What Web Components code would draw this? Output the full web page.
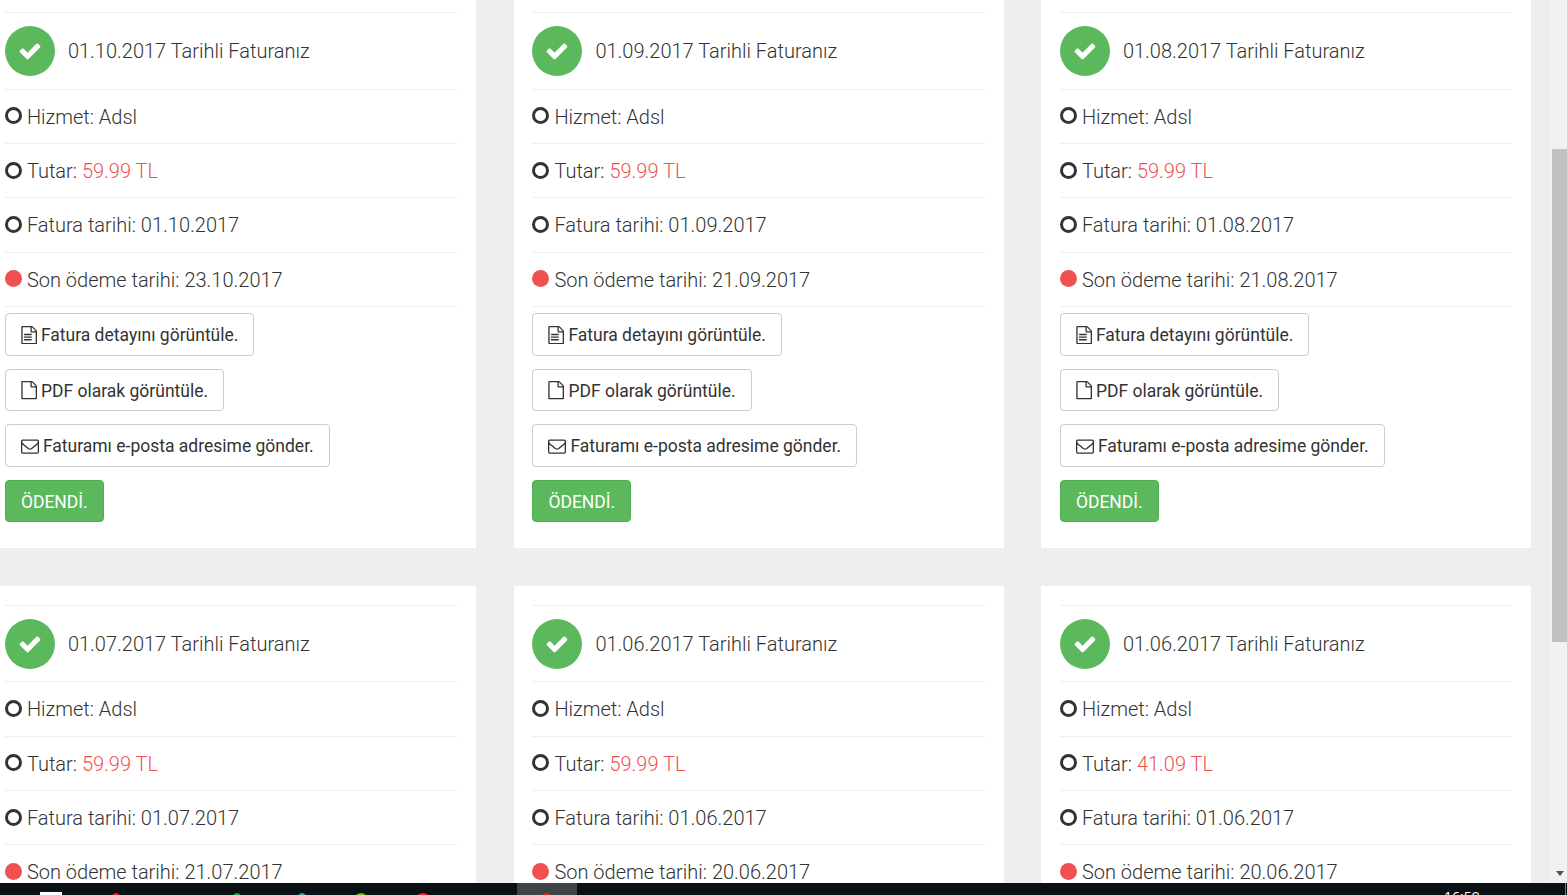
<!DOCTYPE html>
<html lang="tr">
<head>
<meta charset="utf-8">
<title>Faturalar</title>
<style>
  html, body { margin: 0; height: 100%; overflow: hidden; }
  body { font-family: Roboto, "Liberation Sans", sans-serif; background: #eee; }
</style>
</head>
<body>
<invoice-page>
  <invoice-card date="01.10.2017" due="23.10.2017" amount="59.99 TL" actions></invoice-card>
  <invoice-card date="01.09.2017" due="21.09.2017" amount="59.99 TL" actions></invoice-card>
  <invoice-card date="01.08.2017" due="21.08.2017" amount="59.99 TL" actions></invoice-card>
  <invoice-card date="01.07.2017" due="21.07.2017" amount="59.99 TL"></invoice-card>
  <invoice-card date="01.06.2017" due="20.06.2017" amount="59.99 TL"></invoice-card>
  <invoice-card date="01.06.2017" due="20.06.2017" amount="41.09 TL"></invoice-card>
</invoice-page>

<script>
const FA_PATHS = {
  check: "M1671 566q0 40-28 68l-724 724-136 136q-28 28-68 28t-68-28l-136-136-362-362q-28-28-28-68t28-68l136-136q28-28 68-28t68 28l294 295 656-657q28-28 68-28t68 28l136 136q28 28 28 68z",
  file: "M1596 380q28 28 48 76t20 88v1152q0 40-28 68t-68 28h-1344q-40 0-68-28t-28-68v-1600q0-40 28-68t68-28h896q40 0 88 20t76 48zm-444-244v376h376q-10-29-22-41l-313-313q-12-12-41-22zm384 1528v-1024h-416q-40 0-68-28t-28-68v-416h-768v1536h1280z",
  lines: "M384 800q0-14 9-23t23-9h704q14 0 23 9t9 23v64q0 14-9 23t-23 9h-704q-14 0-23-9t-9-23v-64zm736 224q14 0 23 9t9 23v64q0 14-9 23t-23 9h-704q-14 0-23-9t-9-23v-64q0-14 9-23t23-9h704zm0 256q14 0 23 9t9 23v64q0 14-9 23t-23 9h-704q-14 0-23-9t-9-23v-64q0-14 9-23t23-9h704z",
  envelope: "M1664 1504v-768q-32 36-69 66-268 206-426 338-51 43-83 67t-86.500 48.500-102.500 24.500h-2q-48 0-102.500-24.500t-86.500-48.500-83-67q-158-132-426-338-37-30-69-66v768q0 13 9.500 22.500t22.500 9.500h1472q13 0 22.500-9.500t9.500-22.500zm0-1051v-24.500l-.5-13-3-12.500-5.500-9-9-7.500-14-2.500h-1472q-13 0-22.500 9.500t-9.500 22.500q0 168 147 284 193 152 401 317 6 5 35 29.500t46 37.500 44.500 31.500 50.500 27.500 43 9h2q20 0 43-9t50.500-27.500 44.500-31.500 46-37.500 35-29.500q208-165 401-317 54-43 100.500-115.500t46.500-131.500zm128-37v1088q0 66-47 113t-113 47h-1472q-66 0-113-47t-47-113v-1088q0-66 47-113t113-47h1472q66 0 113 47t47 113z"
};

class FaIcon extends HTMLElement {
  connectedCallback() {
    const names = { "file-text": ["file", "lines"], file: ["file"], envelope: ["envelope"], check: ["check"] }[this.getAttribute("name")];
    this.attachShadow({ mode: "open" }).innerHTML = `
      <style>
        :host { display: inline-block; width: 1em; height: 1em; line-height: 0; flex: none; }
        svg { width: 100%; height: 100%; fill: currentColor; }
      </style>
      <svg viewBox="0 0 1792 1792">${names.map(n => `<path d="${FA_PATHS[n]}"/>`).join("")}</svg>`;
  }
}
customElements.define("fa-icon", FaIcon);

class InfoRow extends HTMLElement {
  connectedCallback() {
    this.attachShadow({ mode: "open" }).innerHTML = `
      <style>
        :host {
          display: flex; align-items: center; gap: 5px;
          height: 54.25px; box-sizing: border-box;
          border-top: 1px solid #eee;
          font-size: 20px; font-weight: 300; color: #333;
        }
        .dot { width: 17px; height: 17px; box-sizing: border-box; border-radius: 50%; border: 3px solid #333; flex: none; margin-top: -1px; }
        :host([alert]) .dot { background: #f05050; border: 0; }
        .text { padding-top: 0.85px; }
        ::slotted(b) { font-weight: 300; color: #f05050; }
      </style>
      <span class="dot"></span><span class="text"><slot></slot></span>`;
  }
}
customElements.define("info-row", InfoRow);

class ActionButton extends HTMLElement {
  connectedCallback() {
    this.attachShadow({ mode: "open" }).innerHTML = `
      <style>
        :host {
          display: flex; align-items: center; width: fit-content;
          height: 42.5px; box-sizing: border-box; padding: 1.1px 15px 0; gap: 3px;
          border: 1px solid #ccc; border-radius: 4px; background: #fff;
          font-size: 17.5px; color: #333; margin-top: 13px;
        }
        :host([success]) { background: #5cb85c; border-color: #4cae4c; color: #fff; }
      </style>
      <slot name="icon"></slot><slot></slot>`;
  }
}
customElements.define("action-button", ActionButton);

class InvoiceCard extends HTMLElement {
  connectedCallback() {
    const date = this.getAttribute("date");
    const due = this.getAttribute("due");
    const amount = this.getAttribute("amount");
    // the lower row is cut by the window before its buttons, so it only asks for the rows it shows
    const actions = this.hasAttribute("actions") ? `
      <div class="rule"></div>
      <action-button><fa-icon slot="icon" name="file-text" style="font-size:18.3px;margin-left:-1.3px"></fa-icon>Fatura detayını görüntüle.</action-button>
      <action-button><fa-icon slot="icon" name="file" style="font-size:18.3px;margin-left:-1.3px"></fa-icon>PDF olarak görüntüle.</action-button>
      <action-button><fa-icon slot="icon" name="envelope" style="font-size:18px;margin-right:1px"></fa-icon>Faturamı e-posta adresime gönder.</action-button>
      <action-button success>ÖDENDİ.</action-button>` : "";
    this.attachShadow({ mode: "open" }).innerHTML = `
      <style>
        :host {
          display: block; background: #fff; box-sizing: border-box;
          height: 554.65px; padding: 19px 18.9px 0;
        }
        header {
          display: flex; align-items: center; gap: 13px;
          height: 76.65px; box-sizing: border-box; border-top: 1px solid #eee;
          font-size: 20px; font-weight: 300; color: #333;
        }
        .badge { width: 50px; height: 50px; border-radius: 50%; background: #5cb85c; color: #fff; font-size: 24px;
          display: flex; align-items: center; justify-content: center; flex: none; }
        .rule { border-top: 1px solid #eee; }
        .rule + action-button { margin-top: 6.500px; }
      </style>
      <header><span class="badge"><fa-icon name="check"></fa-icon></span><span>${date} Tarihli Faturanız</span></header>
      <info-row>Hizmet: Adsl</info-row>
      <info-row>Tutar: <b>${amount}</b></info-row>
      <info-row>Fatura tarihi: ${date}</info-row>
      <info-row alert>Son ödeme tarihi: ${due}</info-row>${actions}`;
  }
}
customElements.define("invoice-card", InvoiceCard);

class PageScrollbar extends HTMLElement {
  connectedCallback() {
    this.attachShadow({ mode: "open" }).innerHTML = `
      <style>
        :host { display: block; position: relative; width: 17px; background: #f1f1f1; flex: none; }
        .thumb { position: absolute; left: 2px; right: 0; top: 149px; height: 493px; background: #c1c1c1; }
        .arrow { position: absolute; left: 6px; bottom: 7px; width: 0; height: 0;
          border-left: 4.500px solid transparent; border-right: 4.500px solid transparent; border-top: 5px solid #505050; }
      </style>
      <div class="thumb"></div><div class="arrow"></div>`;
  }
}
customElements.define("page-scrollbar", PageScrollbar);

class TaskBar extends HTMLElement {
  connectedCallback() {
    const apps = [[110, 12, "#e8232e"], [231, 12, "#1aa34a"], [296, 12, "#4a98a8"], [353, 16, "#6cb52d"], [414, 18, "#e8232e"]];
    this.attachShadow({ mode: "open" }).innerHTML = `
      <style>
        :host { display: block; position: relative; height: 12px; background: #0a1114; overflow: hidden; flex: none; color: #fff; }
        i { position: absolute; top: 10px; height: 20px; border-radius: 50%; }
        .start { position: absolute; left: 40px; top: 9px; width: 22px; height: 10px; background: #fff; }
        .active { position: absolute; left: 517px; top: 0; width: 60px; height: 12px; background: #3f4345; }
        .clock { position: absolute; left: 1444px; top: 5px; font: 14px/18px "Open Sans", sans-serif; }
        .edge { position: absolute; left: 1565px; top: 0; width: 1px; height: 12px; background: #777; }
      </style>
      <span class="start"></span>
      ${apps.map(([x, w, c]) => `<i style="left:${x}px;width:${w}px;background:${c}"></i>`).join("")}
      <span class="active"></span>
      <i style="left:541px;width:12px;background:#e8232e"></i>
      <span class="clock">16:59</span>
      <span class="edge"></span>`;
  }
}
customElements.define("task-bar", TaskBar);

class InvoicePage extends HTMLElement {
  connectedCallback() {
    this.attachShadow({ mode: "open" }).innerHTML = `
      <style>
        :host { display: flex; flex-direction: column; height: 100vh; }
        .view { flex: 1; min-height: 0; display: flex; }
        .content { flex: 1; min-width: 0; overflow: hidden; }
        .grid {
          display: grid; grid-template-columns: repeat(3, 490px);
          column-gap: 37.500px; row-gap: 38px; margin: -6.900px 0 0 -14px;
        }
      </style>
      <div class="view">
        <div class="content"><div class="grid"><slot></slot></div></div>
        <page-scrollbar></page-scrollbar>
      </div>
      <task-bar></task-bar>`;
  }
}
customElements.define("invoice-page", InvoicePage);
</script>
</body>
</html>
